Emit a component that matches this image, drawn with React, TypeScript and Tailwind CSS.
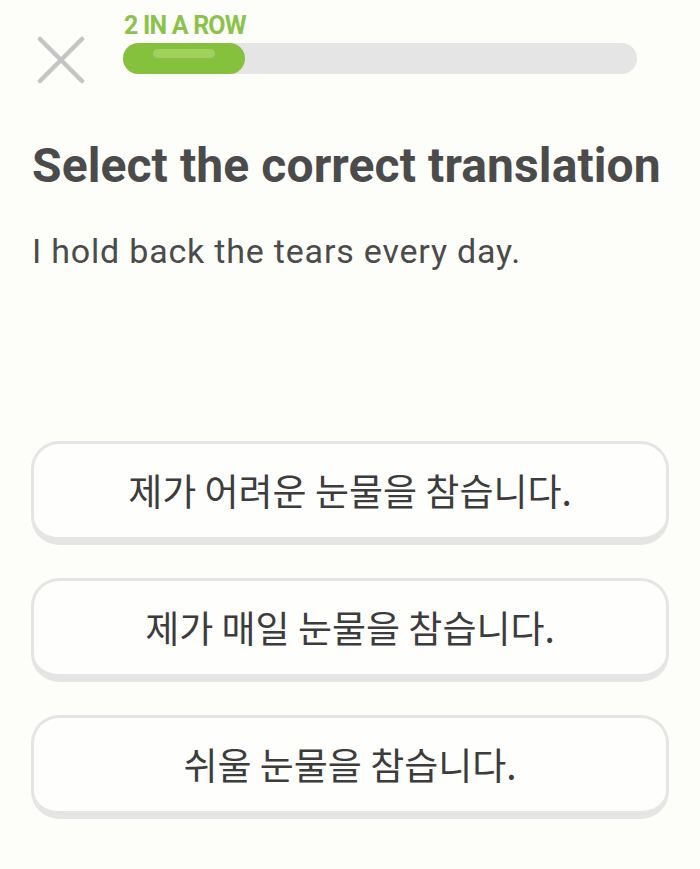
const options = [
  '제가 어려운 눈물을 참습니다.',
  '제가 매일 눈물을 참습니다.',
  '쉬울 눈물을 참습니다.',
];

function CloseIcon() {
  return (
    <svg width="48" height="48" viewBox="0 0 48 48" className="shrink-0">
      <path d="M3 3 L45 45 M45 3 L3 45" stroke="#c4c4c4" strokeWidth="4.5" strokeLinecap="round" />
    </svg>
  );
}

export default function App() {
  return (
    <div
      className="w-[700px] h-[869px] bg-[#fdfdf9] overflow-hidden"
      style={{ fontFamily: 'Roboto, "Noto Sans CJK KR", sans-serif' }}
    >
      {/* header */}
      <div className="flex items-start pl-[37px] pr-[63px] pt-[12px]">
        <div className="mt-[24px]">
          <CloseIcon />
        </div>
        <div className="flex-1 ml-[38px] flex flex-col">
          <div className="text-[25px] leading-[28px] font-bold text-[#8bc34a] tracking-[-0.8px] pl-[1px]">
            2 IN A ROW
          </div>
          <div className="mt-[3px] h-[31px] rounded-full bg-[#e5e5e5] relative">
            <div className="h-full w-[122px] rounded-full bg-[#85c13c] relative">
              <div className="absolute left-[30px] top-[6px] w-[62px] h-[9px] rounded-full bg-[#a0d05e]" />
            </div>
          </div>
        </div>
      </div>

      {/* prompt */}
      <div className="px-[32px] mt-[54px]">
        <h1 className="text-[48px] leading-[56px] font-bold text-[#4b4b4b] tracking-[0.1px]">
          Select the correct translation
        </h1>
        <p className="mt-[37px] text-[34px] leading-[40px] text-[#4b4b4b] tracking-[0.8px]">
          I hold back the tears every day.
        </p>
      </div>

      {/* options */}
      <div className="px-[31px] mt-[170px] flex flex-col gap-[33px]">
        {options.map((o) => (
          <button
            key={o}
            className="h-[104px] w-full rounded-[28px] border-[3px] border-b-[8px] border-[#e5e5e5] bg-[#fefefc] flex items-center justify-center text-[37px] text-[#3c3c3c]"
            style={{ fontFamily: '"Noto Sans CJK KR", sans-serif' }}
          >
            {o}
          </button>
        ))}
      </div>
    </div>
  );
}
